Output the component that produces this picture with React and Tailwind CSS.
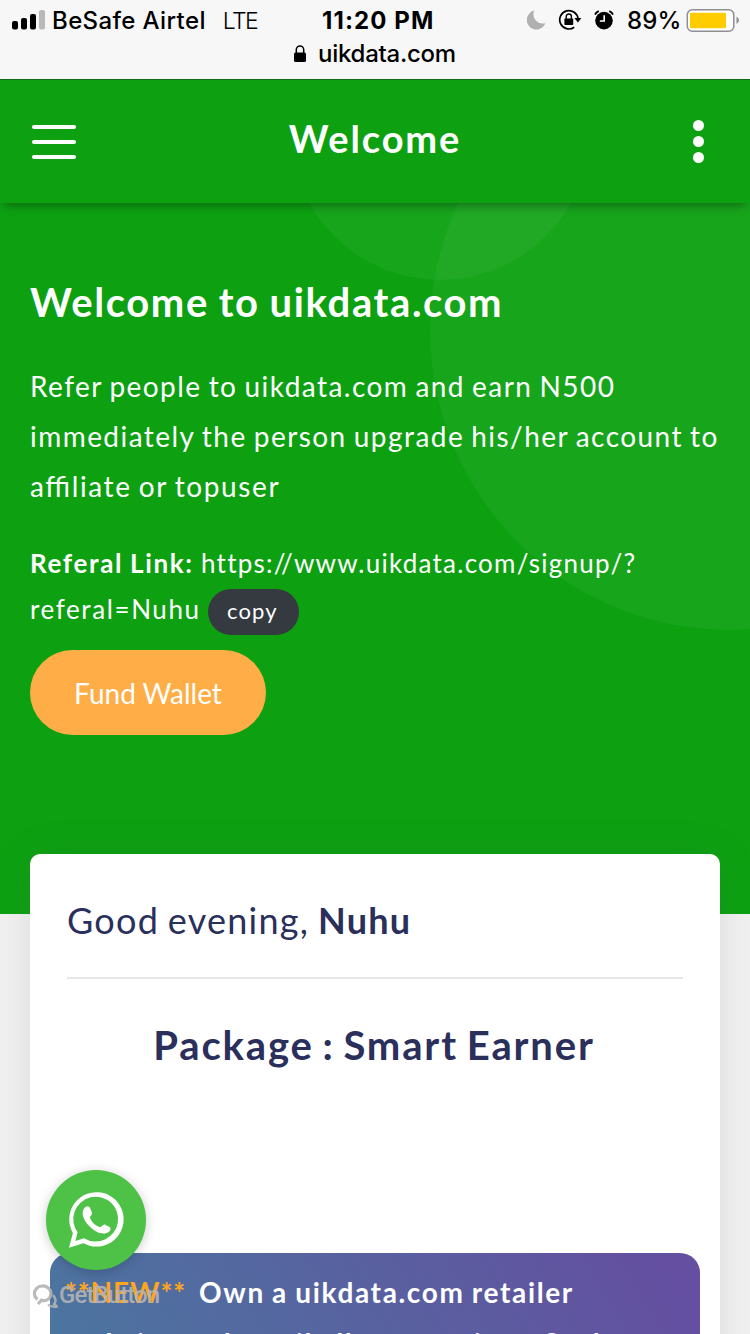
import React from "react";

const SignalBars = () => (
  <svg width="34" height="20" viewBox="0 0 34 20">
    <rect x="0" y="11" width="6" height="8.5" rx="2" fill="#000" />
    <rect x="9" y="8" width="6" height="11.5" rx="2" fill="#000" />
    <rect x="18" y="4" width="6" height="15.5" rx="2" fill="#000" />
    <rect x="27" y="0" width="6" height="19.5" rx="2" fill="#b9b9b9" />
  </svg>
);

const Moon = () => (
  <svg width="19" height="20" viewBox="0 0 19 20">
    <path d="M7.2 0.6A9.6 9.6 0 1 0 18.4 13.2A9.4 9.4 0 0 1 7.2 0.6Z" fill="#b0b0b0" />
  </svg>
);

const RotationLock = () => (
  <svg width="24" height="22" viewBox="0 0 24 22" fill="none">
    <path d="M16.2 18.3A9.2 9.2 0 1 1 20.1 10" stroke="#000" strokeWidth="1.7" />
    <path d="M16.4 9H23.4L19.9 13.6Z" fill="#000" />
    <rect x="6.4" y="9.5" width="8.8" height="6.5" rx="0.8" fill="#000" />
    <path d="M8.2 10V7.6A2.6 2.6 0 0 1 13.4 7.6V10" stroke="#000" strokeWidth="1.4" />
  </svg>
);

const Alarm = () => (
  <svg width="20" height="20" viewBox="0 0 20 20" fill="none">
    <circle cx="10" cy="10.6" r="8.8" fill="#000" />
    <path d="M1 4.6Q2 2.2 4.8 1.2M19 4.6Q18 2.2 15.2 1.2" stroke="#000" strokeWidth="1.8" />
    <path d="M10.2 5.2V11H5.8" stroke="#fff" strokeWidth="1.6" />
  </svg>
);

const Battery = () => (
  <svg width="54" height="24" viewBox="0 0 54 24">
    <rect x="1.3" y="1.7" width="46.5" height="21.5" rx="5" fill="#fff" stroke="#8e8e93" strokeWidth="1.5" />
    <rect x="4" y="4.7" width="36" height="15.5" rx="1" fill="#ffcc00" />
    <path d="M50.5 8.5Q53 10 53 12.3T50.5 16.1Z" fill="#8e8e93" />
  </svg>
);

function StatusBar() {
  return (
    <div className="h-[79px] bg-[#f7f7f7] font-['Inter',sans-serif] text-black">
      <div className="flex h-10 items-center pl-3 pr-[8px] leading-none whitespace-nowrap">
        <div className="flex w-[310px] items-center">
          <SignalBars />
          <span className="ml-[6px] pt-[2px] text-[24px] font-medium tracking-[0.38px]">BeSafe Airtel</span>
          <span className="ml-[17px] pt-[2px] text-[23px] font-light tracking-[-1.6px]">LTE</span>
        </div>
        <div className="w-[205px] pt-[2px] text-[24px] font-bold tracking-[1.1px]">11:20 PM</div>
        <Moon />
        <div className="ml-[12px]"><RotationLock /></div>
        <div className="ml-[12px]"><Alarm /></div>
        <span className="ml-[13px] w-[59px] pt-[2px] text-[24px] font-medium tracking-[0.1px]">89%</span>
        <Battery />
      </div>
      <div className="flex h-7 items-center pl-[294px] text-[24px] leading-none font-medium">
        <svg width="12" height="18" viewBox="0 0 12 18">
          <rect x="0" y="7.5" width="12" height="9.5" rx="1.5" fill="#000" />
          <path d="M2.3 8V4.6A3.7 3.7 0 0 1 9.7 4.6V8" fill="none" stroke="#000" strokeWidth="1.5" />
        </svg>
        <span className="ml-3 tracking-[-0.25px]">uikdata.com</span>
      </div>
    </div>
  );
}

function Header() {
  return (
    <header className="relative z-10 flex h-[124px] items-center justify-between border-t border-[#12691a] bg-[#0da112] pl-[32px] pr-[46px] shadow-[0_6px_10px_-4px_rgba(0,0,0,0.38)]">
      <div className="flex w-11 flex-col gap-[11px]">
        <span className="h-1 rounded-full bg-white" />
        <span className="h-1 rounded-full bg-white" />
        <span className="h-1 rounded-full bg-white" />
      </div>
      <h1 className="mb-[7px] ml-[-19px] text-[38px] leading-none font-bold tracking-[1.9px]">Welcome</h1>
      <div className="flex flex-col gap-[5px]">
        <span className="size-[11px] rounded-full bg-white" />
        <span className="size-[11px] rounded-full bg-white" />
        <span className="size-[11px] rounded-full bg-white" />
      </div>
    </header>
  );
}

function Hero() {
  return (
    <section className="relative h-[711px] overflow-hidden bg-[#0da112] px-[30px] pt-[69px]">
      <div className="absolute top-[-223px] left-[290px] size-[300px] rounded-full bg-white/[0.045]" />
      <div className="absolute top-[-173px] left-[430px] size-[600px] rounded-full bg-white/[0.045]" />
      <div className="relative whitespace-nowrap">
        <h2 className="h-[60px] text-[40px] leading-[60px] font-bold tracking-[1.6px] [word-spacing:-1.4px]">Welcome to uikdata.com</h2>
        <p className="mt-[29px] text-[28px] leading-[50px] tracking-[1.45px] [word-spacing:-1.5px] [font-feature-settings:'liga']">
          Refer people to uikdata.com and earn N500<br />
          immediately the person upgrade his/her account to<br />
          <span className="tracking-[1.6px]">affiliate or topuser</span>
        </p>
        <p className="mt-[29px] text-[26px] leading-[46px] tracking-[1.65px] [word-spacing:-1px]">
          <b>Referal Link:</b> <span className="tracking-[1.24px]">https://www.uikdata.com/signup/?</span>
        </p>
        <div className="flex items-start text-[26px] leading-[46px] tracking-[1.6px]">
          <span className="w-[178px]">referal=Nuhu</span>
          <button className="mt-[3px] h-[46px] w-[91px] rounded-full bg-[#343a40] pr-[8px] pb-[3px] pl-[14px] text-left text-[22px] leading-none tracking-[1.1px]">
            <span className="ml-[5px]">copy</span>
          </button>
        </div>
        <button className="mt-[15px] h-[85px] w-[236px] rounded-full bg-[#ffad46] text-[28px]">Fund Wallet</button>
      </div>
    </section>
  );
}

function AccountCard() {
  return (
    <main className="relative mx-[30px] mt-[-60px] h-[600px] rounded-[10px] bg-white px-5 text-[#2a2f5b] shadow-[0_2px_40px_rgba(69,65,78,0.12)]">
      <div className="mx-[17px] h-[125px] border-b-2 border-[#e6e6e6] pt-[36px] text-[36px] leading-[60px] tracking-[1.25px] [word-spacing:-1.7px] whitespace-nowrap">
        Good evening, <b>Nuhu</b>
      </div>
      <h2 className="mt-[36px] pr-[2px] text-center text-[40px] leading-[60px] font-bold tracking-[1.85px] [word-spacing:-2.8px] whitespace-nowrap">Package : Smart Earner</h2>
      <div className="mt-[178px] h-[300px] rounded-[20px] bg-linear-[60deg,#4481a0_-10%,#644fa0_95%] px-[15px] pt-[14px] text-[28px] leading-[50px] font-bold tracking-[1.65px] [word-spacing:-1.2px] whitespace-nowrap text-white">
        <p>
          <span className="inline-block w-[134px] tracking-[0.9px] text-[#ffa51c]">**NEW**</span>Own a uikdata.com retailer
        </p>
        <p className="mt-px">website and retail all our services. Such</p>
      </div>
    </main>
  );
}

function ChatWidget() {
  return (
    <div className="absolute top-[1170px] left-[32px] z-20">
      <div className="ml-[14px] flex size-[100px] items-center justify-center rounded-full bg-[#4dc247] shadow-[0_2px_12px_rgba(0,0,0,0.2)]">
        <svg className="overflow-visible" width="56" height="56" viewBox="0 0 56 56">
          <path fillRule="evenodd" d="M1 55.7L4.9 41A27.2 27.2 0 1 1 15.5 51.3ZM9.6 40.3L7.4 49L16 46.2A22.4 22.4 0 1 0 9.6 40.3Z" fill="#fff" />
          <path d="M16 16.5C18.5 13 21.5 14 22 16L24 20.5C24.8 22.7 22 24 21.8 25.5C24 30.5 27.2 33.7 32 35.3C34 35.2 34.8 31.8 37.2 32.7L42 35.2C43.3 36 42.6 38.7 40.3 40.2C34.5 43.8 26.3 39.7 21 33.8C15.7 28.2 12.8 21.5 16 16.5Z" fill="#fff" />
        </svg>
      </div>
      <div className="mt-[12px] flex items-center text-[#b4b4b4] opacity-90">
        <svg width="26" height="26" viewBox="0 0 26 26" fill="none">
          <path d="M5.5 17.5A8.3 7.6 0 1 1 16.5 17Q13.5 19.5 9.5 18.2L6 22" stroke="currentColor" strokeWidth="3.2" />
          <path d="M21 13Q25.5 18.5 22 22L25 24.5Q19 25.5 16 22.5" stroke="currentColor" strokeWidth="2.4" />
        </svg>
        <span className="ml-px font-['Roboto',sans-serif] text-[24px] leading-[26px] font-medium tracking-[-0.9px]">GetButton</span>
      </div>
    </div>
  );
}

export default function App() {
  return (
    <div className="relative h-[1334px] w-[750px] overflow-hidden bg-[#f1f1f1] font-['Lato',sans-serif] text-white">
      <StatusBar />
      <Header />
      <Hero />
      <AccountCard />
      <ChatWidget />
    </div>
  );
}
